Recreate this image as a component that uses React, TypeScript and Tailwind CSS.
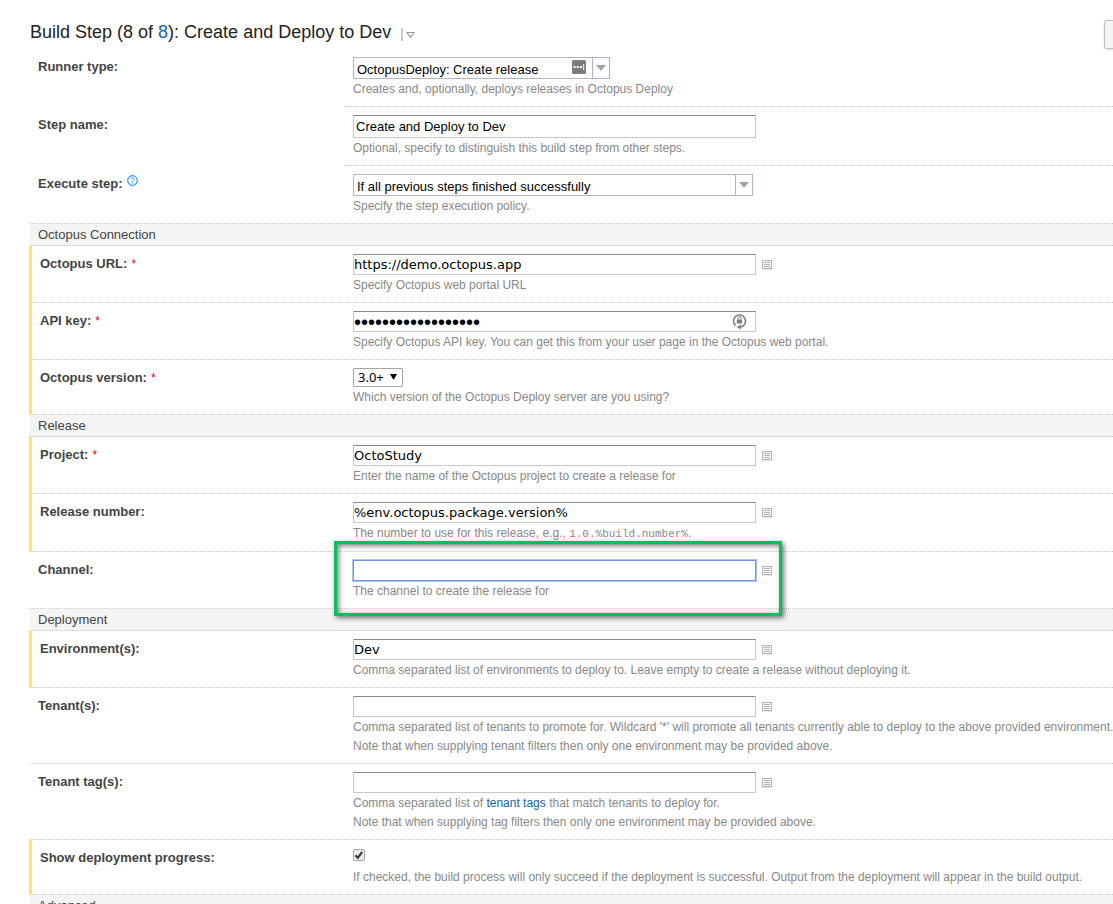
import type { ReactNode } from "react";

const hintClass = "mt-px text-[12px] leading-[19px] text-[#888]";

function ListIcon() {
  return (
    <svg width="10" height="10" viewBox="0 0 10 10" shapeRendering="crispEdges" aria-hidden="true">
      <rect x="0.5" y="0.5" width="9" height="8" fill="#f4f4f4" stroke="#b4b4b4" />
      <path d="M2 2.5h6M2 4.5h6M2 6.5h6" stroke="#b4b4b4" />
      <path d="M0 9.5h10" stroke="#e6e6e6" />
    </svg>
  );
}

function LockIcon() {
  return (
    <svg width="15" height="17" viewBox="0 0 15 17" fill="none" aria-hidden="true">
      <path d="M3.6 12.6A6 6 0 1 1 10.6 13.2Q9.6 14 8 14" stroke="#808080" strokeWidth="1.6" />
      <path d="M4.8 14l4-2.6v5.2z" fill="#808080" />
      <rect x="4.8" y="6.6" width="5.4" height="4" rx="0.5" fill="#808080" />
      <path d="M5.9 6.8V5.4a1.6 1.6 0 0 1 3.2 0v1.4" stroke="#909090" strokeWidth="1.1" />
    </svg>
  );
}

function HelpIcon() {
  return (
    <svg width="11" height="11" viewBox="0 0 11 11" fill="none" aria-hidden="true">
      <circle cx="5.5" cy="5.5" r="4.8" stroke="#2a9df4" strokeWidth="1.2" />
      <path d="M4 4.4a1.5 1.5 0 1 1 2.3 1.2c-.6.4-.8.6-.8 1.1" stroke="#2a9df4" strokeWidth="1" />
      <path d="M5.5 7.5v1" stroke="#2a9df4" strokeWidth="1" />
    </svg>
  );
}

function Section({ title }: { title: string }) {
  return (
    <h2 className="border-b border-dotted border-[#c8c8c8] bg-[#f4f4f4] pl-2 text-[13px] leading-[21px] font-normal text-[#444]">
      {title}
    </h2>
  );
}

type RowProps = {
  id: string;
  label: string;
  required?: boolean;
  changed?: boolean;
  shortRule?: boolean;
  help?: boolean;
  children: ReactNode;
};

function Row({ id, label, required, changed, shortRule, help, children }: RowProps) {
  const rule = "border-b border-dotted border-[#c8c8c8]";
  return (
    <div className={changed ? "-mt-px -ml-px border-l-3 border-[#ffdf80] pt-px" : ""}>
      <div className={`flex ${shortRule ? "" : rule}`}>
        <div
          className={`shrink-0 pt-2 pl-2 text-[13px] leading-[19px] font-bold text-[#444] ${changed ? "w-[313px]" : "w-[315px]"}`}
        >
          <label htmlFor={id}>{label}</label>
          {required && <span className="ml-1 text-[12px] font-normal text-[#e00020]">*</span>}
          {help && (
            <button type="button" aria-label="Help" className="ml-1 align-[2px]">
              <HelpIcon />
            </button>
          )}
        </div>
        <div className={`relative min-w-0 flex-1 pt-2 pb-[7px] pl-2 ${shortRule ? rule : ""}`}>{children}</div>
      </div>
    </div>
  );
}

type ParamProps = {
  id: string;
  value?: string;
  type?: "text" | "password";
  active?: boolean;
  picker?: boolean;
  icon?: ReactNode;
};

function ParamInput({ id, value = "", type = "text", active, picker = true, icon }: ParamProps) {
  return (
    <div className="flex items-center gap-1.5">
      <div className="relative w-[403px]">
        <input
          id={id}
          type={type}
          defaultValue={value}
          className={`block h-[21px] w-full border bg-white text-black outline-none ${
            type === "password" ? "text-[20px]" : "font-['DejaVu_Sans',sans-serif] text-[13px]"
          } ${
            active
              ? "border-[#7096d8] shadow-[0_0_0_1px_#a5c3f7]"
              : "border-[#c8c8c8] border-t-[#888]"
          }`}
        />
        {icon && <span className="absolute top-[2px] right-[9px]">{icon}</span>}
      </div>
      {picker && (
        <button type="button" aria-label="Insert parameter">
          <ListIcon />
        </button>
      )}
    </div>
  );
}

function Combo({ id, value, width, badge }: { id: string; value: string; width: string; badge?: boolean }) {
  return (
    <div className={`relative ${width}`}>
      <select
        id={id}
        className="block h-[22px] w-full appearance-none border border-[#b3b3cc] bg-white pt-0.5 pl-[3px] text-[13px] text-black outline-none"
      >
        <option>{value}</option>
      </select>
      {badge && (
        <svg className="pointer-events-none absolute top-[3px] right-[24px]" width="14" height="14" viewBox="0 0 14 14" aria-hidden="true">
          <rect width="14" height="14" rx="1.5" fill="#7c7c7c" />
          <path d="M1.5 6h2v2h-2zM4.7 6h2v2h-2zM7.9 6h2v2h-2zM11.2 4h1v6h-1z" fill="#fff" />
        </svg>
      )}
      <span className="pointer-events-none absolute inset-y-0 right-0 flex w-[18px] items-center justify-center border border-[#b3b3cc] bg-white">
        <svg width="10" height="6" viewBox="0 0 10 6" aria-hidden="true">
          <path d="M0 0h10L5 6z" fill="#a3a3a3" />
        </svg>
      </span>
    </div>
  );
}

export default function App() {
  return (
    <main className="h-screen overflow-x-hidden overflow-y-auto bg-white pl-[30px] font-['Liberation_Sans',Arial,sans-serif] [scrollbar-width:none]">
      <header className="flex items-start justify-between pt-5">
        <h1 className="flex items-center text-[18px] leading-6 text-[#222]">
          <span>
            Build Step (8 of{" "}
            <a href="#steps" className="text-[#1564a8]">
              8
            </a>
            ): Create and Deploy to Dev
          </span>
          <button type="button" aria-label="Step actions" className="mt-1 ml-2.5">
            <svg width="14" height="13" viewBox="0 0 14 13" fill="none" aria-hidden="true">
              <path d="M1 0v13" stroke="#aaa" strokeWidth="1.3" />
              <path d="M6 4.5h7L9.5 9.5z" stroke="#999" strokeWidth="1.2" />
            </svg>
          </button>
        </h1>
        <button
          type="button"
          aria-label="Actions"
          className="-mr-4 h-[29px] w-[25px] rounded-[3px] border border-[#c0c0c0] bg-[#f5f5f5] shadow-sm"
        />
      </header>

      <form onSubmit={(e) => e.preventDefault()}>
        <Row id="runner" label="Runner type:" shortRule>
          <Combo id="runner" value="OctopusDeploy: Create release" width="w-[257px]" badge />
          <p className={hintClass}>Creates and, optionally, deploys releases in Octopus Deploy</p>
        </Row>
        <Row id="name" label="Step name:" shortRule>
          <input
            id="name"
            type="text"
            defaultValue="Create and Deploy to Dev"
            className="block h-[23px] w-[403px] border border-[#c8c8c8] border-t-[#888] bg-white px-0.5 text-[13px] text-black outline-none"
          />
          <p className={hintClass}>Optional, specify to distinguish this build step from other steps.</p>
        </Row>
        <Row id="execute" label="Execute step:" help>
          <Combo id="execute" value="If all previous steps finished successfully" width="w-[400px]" />
          <p className={hintClass}>Specify the step execution policy.</p>
        </Row>

        <Section title="Octopus Connection" />
        <Row id="url" label="Octopus URL:" required changed>
          <ParamInput id="url" value="https://demo.octopus.app" />
          <p className={hintClass}>Specify Octopus web portal URL</p>
        </Row>
        <Row id="key" label="API key:" required changed>
          <ParamInput id="key" type="password" value="API-DEMO0123456789" picker={false} icon={<LockIcon />} />
          <p className={hintClass}>
            Specify Octopus API key. You can get this from your user page in the Octopus web portal.
          </p>
        </Row>
        <Row id="version" label="Octopus version:" required changed>
          <div className="relative w-[50px]">
            <select
              id="version"
              className="block h-[19px] w-full appearance-none rounded-[1px] border border-[#a6a6a6] bg-white pl-1 font-['Noto_Sans',sans-serif] text-[13px] leading-[17px] text-black outline-none"
            >
              <option>3.0+</option>
            </select>
            <svg className="pointer-events-none absolute top-[6px] right-[6px]" width="7" height="6" viewBox="0 0 7 6" aria-hidden="true">
              <path d="M0 0h7L3.5 6z" fill="#000" />
            </svg>
          </div>
          <p className={hintClass}>Which version of the Octopus Deploy server are you using?</p>
        </Row>

        <Section title="Release" />
        <Row id="project" label="Project:" required changed>
          <ParamInput id="project" value="OctoStudy" />
          <p className={hintClass}>Enter the name of the Octopus project to create a release for</p>
        </Row>
        <Row id="release" label="Release number:" changed>
          <ParamInput id="release" value="%env.octopus.package.version%" />
          <p className="pb-px text-[12px] leading-[20px] text-[#888]">
            The number to use for this release, e.g.,{" "}
            <code className="font-['Liberation_Mono',monospace] text-[11px] leading-none">1.0.%build.number%</code>.
          </p>
        </Row>
        <Row id="channel" label="Channel:">
          <ParamInput id="channel" active />
          <p className={hintClass}>The channel to create the release for</p>
          <div className="pointer-events-none absolute -top-[11px] -left-[11px] z-10 h-[75px] w-[448px] border-3 border-[#00c060] shadow-[2px_2px_5px_rgba(0,0,0,0.55),inset_2px_2px_5px_rgba(0,0,0,0.5)]" />
        </Row>

        <Section title="Deployment" />
        <Row id="environments" label="Environment(s):" changed>
          <ParamInput id="environments" value="Dev" />
          <p className={hintClass}>
            Comma separated list of environments to deploy to. Leave empty to create a release without deploying it.
          </p>
        </Row>
        <Row id="tenants" label="Tenant(s):">
          <ParamInput id="tenants" />
          <p className={`${hintClass} lg:whitespace-nowrap`}>
            Comma separated list of tenants to promote for. Wildcard '*' will promote all tenants currently able to
            deploy to the above provided environment.
            <br />
            Note that when supplying tenant filters then only one environment may be provided above.
          </p>
        </Row>
        <Row id="tags" label="Tenant tag(s):">
          <ParamInput id="tags" />
          <p className={hintClass}>
            Comma separated list of{" "}
            <a href="#tenant-tags" className="text-[#1564a8]">
              tenant tags
            </a>{" "}
            that match tenants to deploy for.
            <br />
            Note that when supplying tag filters then only one environment may be provided above.
          </p>
        </Row>
        <Row id="progress" label="Show deployment progress:" changed>
          <div className="relative h-[19px] pt-px">
            <input
              id="progress"
              type="checkbox"
              defaultChecked
              className="peer block size-3 appearance-none rounded-[2px] border border-[#a8a8a8] bg-[#ebebeb]"
            />
            <svg
              className="pointer-events-none absolute top-px left-0 hidden peer-checked:block"
              width="12"
              height="12"
              viewBox="0 0 12 12"
              fill="none"
              aria-hidden="true"
            >
              <path d="M2.5 6.3l2.3 2.5 4.4-6" stroke="#3c3c3c" strokeWidth="2.2" />
            </svg>
          </div>
          <p className={hintClass}>
            If checked, the build process will only succeed if the deployment is successful. Output from the deployment
            will appear in the build output.
          </p>
        </Row>

        <Section title="Advanced" />
      </form>
    </main>
  );
}
